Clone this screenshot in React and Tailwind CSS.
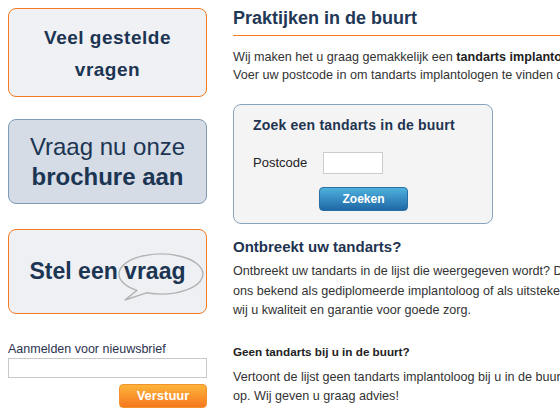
const font = { fontFamily: '"Liberation Sans", Arial, sans-serif' };

function SpeechBubble() {
  return (
    <svg className="pointer-events-none absolute left-0 top-0" width="199" height="85" viewBox="0 0 199 85">
      <path
        d="M137.6 62.8 A42 20 0 1 0 127.9 60.4 L116 70 Z"
        fill="none"
        stroke="#b3b3b3"
        strokeWidth="1.4"
        strokeLinejoin="round"
      />
    </svg>
  );
}

function SideBoxes() {
  return (
    <div className="flex flex-col">
      <a className="flex h-[89px] flex-col items-center justify-center rounded-[8px] border border-[#f47b20] bg-[#f0f1f5] pt-[2px] text-[19px] font-bold leading-[32px] tracking-[0.5px] text-[#1c3553]">
        <span>Veel gestelde</span>
        <span>vragen</span>
      </a>
      <a className="mt-[22px] flex h-[85px] flex-col items-center justify-center rounded-[8px] border border-[#7f9bb7] bg-[#d5dce6] text-[24px] leading-[30px] text-[#1c3553]">
        <span>Vraag nu onze</span>
        <span className="font-bold">brochure aan</span>
      </a>
      <a className="relative mt-[25px] flex h-[85px] items-center justify-center rounded-[8px] border border-[#f47b20] bg-[#eff0f4] pb-[1px] text-[23px] font-bold text-[#1c3553]">
        <span className="relative">Stel een vraag</span>
        <SpeechBubble />
      </a>
    </div>
  );
}

function Newsletter() {
  return (
    <div className="mt-[28px] flex flex-col">
      <label className="text-[12.5px] leading-[14px] text-[#2b3350]">Aanmelden voor nieuwsbrief</label>
      <input className="mt-[2px] h-[20px] w-full border border-[#c9c9c9] bg-white outline-none" />
      <div className="mt-[6px] flex justify-end">
        <button className="h-[24px] w-[88px] rounded-[4px] border border-[#f3922c] bg-linear-to-b from-[#fcb43a] to-[#f5771e] text-[13px] font-bold text-white">
          Verstuur
        </button>
      </div>
    </div>
  );
}

function SearchBox() {
  return (
    <div className="mt-[20px] w-[260px] rounded-[8px] border border-[#8aa4bd] bg-[#f4f4f5] pb-[12px] pl-[19px] pt-[11px]">
      <h3 className="text-[14px] font-bold leading-[18px] tracking-[0.2px] text-[#1f3450]">Zoek een tandarts in de buurt</h3>
      <div className="mt-[18px] flex items-center">
        <span className="w-[70px] text-[13px] text-[#222]">Postcode</span>
        <input className="h-[22px] w-[60px] border border-[#cccccc] bg-white outline-none" />
      </div>
      <button className="ml-[66px] mt-[13px] h-[24px] w-[89px] rounded-[4px] border border-[#2a6fa3] bg-linear-to-b from-[#4fb1dc] to-[#1f68a6] text-[12px] font-bold text-white">
        Zoeken
      </button>
    </div>
  );
}

export default function App() {
  return (
    <div className="flex h-[420px] w-[560px] overflow-hidden bg-white" style={font}>
      <div className="ml-[8px] mt-[8px] w-[199px] shrink-0">
        <SideBoxes />
        <Newsletter />
      </div>
      <div className="ml-[26px] w-[420px] shrink-0 pt-[7px] text-[12.6px] text-[#333]">
        <h2 className="border-b border-[#f47b20] pb-[6px] text-[18px] font-bold leading-[22px] text-[#1f3856]">
          Praktijken in de buurt
        </h2>
        <div className="mt-[12px] whitespace-nowrap leading-[18px]">
          <p>
            Wij maken het u graag gemakkelijk een <b className="text-[#222]">tandarts implantoloog</b> te vinden.
          </p>
          <p>Voer uw postcode in om tandarts implantologen te vinden die bij u in de buurt zitten.</p>
        </div>
        <SearchBox />
        <h3 className="mt-[14px] text-[15px] font-bold leading-[18px] text-[#1e3450]">Ontbreekt uw tandarts?</h3>
        <div className="mt-[6px] whitespace-nowrap leading-[19.5px]">
          <p>Ontbreekt uw tandarts in de lijst die weergegeven wordt? Dan is deze tandarts niet</p>
          <p>ons bekend als gediplomeerde implantoloog of als uitstekend tandarts. Zo bieden</p>
          <p>wij u kwaliteit en garantie voor goede zorg.</p>
        </div>
        <h4 className="mt-[23.5px] text-[11.7px] font-bold leading-[16px] text-[#222]">Geen tandarts bij u in de buurt?</h4>
        <div className="mt-[7.5px] whitespace-nowrap leading-[19px]">
          <p>Vertoont de lijst geen tandarts implantoloog bij u in de buurt? Neem dan contact met ons</p>
          <p>op. Wij geven u graag advies!</p>
        </div>
      </div>
    </div>
  );
}
